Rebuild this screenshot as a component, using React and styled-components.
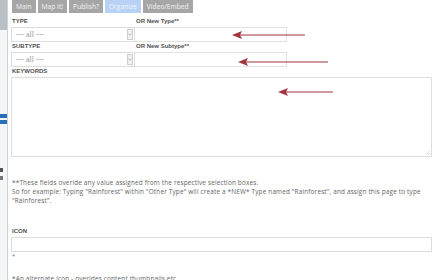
import React from 'react'
import styled, { createGlobalStyle } from 'styled-components'

const GlobalStyle = createGlobalStyle`
  html, body {
    margin: 0;
    padding: 0;
    background: #ffffff;
    overflow: hidden;
  }
  body {
    font-family: "Open Sans", "Liberation Sans", sans-serif;
  }
`

const Page = styled.div`
  display: flex;
  width: 438px;
  height: 280px;
  overflow: hidden;
`

const SideStrip = styled.div`
  width: 7px;
  flex: none;
  display: flex;
  flex-direction: column;
  border-right: 1px solid #c9d3dc;
  background: #f4f6f8;
`

const StripBlock = styled.div`
  height: ${p => p.h}px;
  width: ${p => p.w || 7}px;
  flex: none;
  background: ${p => p.c};
`

const Panel = styled.div`
  flex: 1;
  display: flex;
  flex-direction: column;
  padding: 0 7px 0 3px;
  position: relative;

  & > * {
    flex-shrink: 0;
  }
`

const Tabs = styled.div`
  display: flex;
  gap: 2px;
  margin-left: 1px;
`

const Tab = styled.div`
  height: 13px;
  padding: 0 4px;
  display: flex;
  align-items: center;
  font-size: 6.7px;
  color: ${p => (p.active ? '#eef5ff' : '#f2f2f2')};
  background: ${p => (p.active ? '#b8d2f5' : '#a6a6a6')};
`

const Grid = styled.div`
  display: grid;
  grid-template-columns: 124px 152px;
  margin-top: 4px;
`

const Label = styled.div`
  font-family: "Liberation Sans", Arial, sans-serif;
  font-weight: bold;
  font-size: 6px;
  color: #505050;
  height: 10px;
  line-height: 9px;
  padding-left: ${p => p.pad || 1}px;
`

const Select = styled.div`
  height: 15px;
  box-sizing: border-box;
  border: 1px solid #dcdcdc;
  display: flex;
  align-items: center;
  justify-content: space-between;
  padding: 0 1px 0 4px;
  font-family: "Liberation Serif", serif;
  font-size: 8px;
  color: #9c9c9c;
`

const SelectArrow = styled.div`
  width: 6px;
  height: 11px;
  box-sizing: border-box;
  border: 1px solid #cfcfcf;
  background: #f0f0f0;
  display: flex;
  align-items: center;
  justify-content: center;
`

const Input = styled.div`
  height: 15px;
  box-sizing: border-box;
  border: 1px solid #e2e2e2;
  border-left: none;
`

const Textarea = styled.div`
  height: 80px;
  box-sizing: border-box;
  border: 1px solid #dedede;
  position: relative;
  margin-right: -1px;
`

const Grip = styled.svg`
  position: absolute;
  right: 1px;
  bottom: 1px;
`

const Note = styled.p`
  margin: 21px 0 0 0;
  font-size: 6.4px;
  letter-spacing: 0.17px;
  line-height: 9px;
  color: #646464;
  padding-left: 1px;
`

const IconLabel = styled(Label)`
  margin-top: 22px;
`

const WideInput = styled.div`
  height: 15px;
  box-sizing: border-box;
  border: 1px solid #dcdcdc;
  margin-right: -1px;
`

const Star = styled.div`
  font-size: 6px;
  color: #777;
  line-height: 8px;
  padding-left: 1px;
`

const FootNote = styled.div`
  margin-top: 14px;
  font-size: 6.4px;
  letter-spacing: 0.17px;
  line-height: 9px;
  color: #646464;
  padding-left: 1px;
`

const Arrow = styled.svg`
  position: absolute;
  left: ${p => p.x}px;
  top: ${p => p.y}px;
  overflow: visible;
`

function RedArrow({ x, y, w }) {
  return (
    <Arrow x={x} y={y} width={w} height={8} viewBox={`0 0 ${w} 8`}>
      <line x1="6" y1="4" x2={w} y2="4" stroke="#a4343f" strokeWidth="1.1" />
      <polygon points="0,4 10,0 8,4 10,8" fill="#a4343f" />
    </Arrow>
  )
}

function Chevron() {
  return (
    <SelectArrow>
      <svg width="4" height="3" viewBox="0 0 4 3">
        <path d="M0.5 0.8 L2 2.2 L3.5 0.8" stroke="#888" strokeWidth="0.6" fill="none" />
      </svg>
    </SelectArrow>
  )
}

export default function App() {
  return (
    <>
      <GlobalStyle />
      <Page>
        <SideStrip>
          <StripBlock h={30} c="#b9bfc5" />
          <StripBlock h={84} c="#f4f6f8" />
          <StripBlock h={4} c="#2a6fb8" />
          <StripBlock h={2} c="#f4f6f8" />
          <StripBlock h={4} c="#2a6fb8" />
          <StripBlock h={44} c="#f4f6f8" />
          <StripBlock h={4} w={3} c="#555" />
          <StripBlock h={4} c="#f4f6f8" />
          <StripBlock h={4} w={3} c="#777" />
        </SideStrip>
        <Panel>
          <Tabs>
            <Tab>Main</Tab>
            <Tab>Map It!</Tab>
            <Tab>Publish?</Tab>
            <Tab active>Organize</Tab>
            <Tab>Video/Embed</Tab>
          </Tabs>
          <Grid>
            <Label>TYPE</Label>
            <Label pad={0}>OR New Type**</Label>
            <Select>
              --- all ---
              <Chevron />
            </Select>
            <Input />
            <Label>SUBTYPE</Label>
            <Label pad={0}>OR New Subtype**</Label>
            <Select>
              --- all ---
              <Chevron />
            </Select>
            <Input />
          </Grid>
          <Label>KEYWORDS</Label>
          <Textarea>
            <Grip width="4" height="4" viewBox="0 0 4 4">
              <path d="M0 4 L4 0 M2 4 L4 2" stroke="#bbb" strokeWidth="0.5" />
            </Grip>
          </Textarea>
          <Note>
            **These fields overide any value assigned from the respective selection boxes.
            <br />
            So for example: Typing "Rainforest" within "Other Type" will create a *NEW* Type named "Rainforest", and assign this page to type
            "Rainforest".
          </Note>
          <IconLabel>ICON</IconLabel>
          <WideInput />
          <Star>*</Star>
          <FootNote>*An alternate icon - overides content thumbnails etc..</FootNote>
          <RedArrow x={224} y={31} w={73} />
          <RedArrow x={230} y={58} w={90} />
          <RedArrow x={270} y={88} w={55} />
        </Panel>
      </Page>
    </>
  )
}
